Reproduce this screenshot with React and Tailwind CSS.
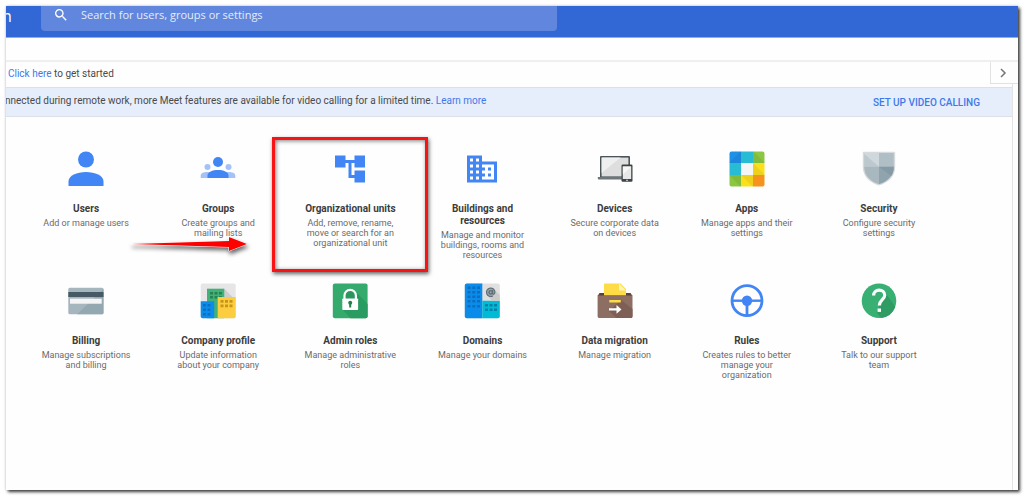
import React from "react";

const BLUE = "#4285f4";

const UsersIcon = () => (
  <svg viewBox="0 0 36 36" className="w-9 h-9" fill={BLUE}>
    <circle cx="18" cy="8.500" r="8" />
    <path d="M.5 35v-4.500C.5 24.500 9 21 18 21s17.500 3.500 17.500 9.500V35z" />
  </svg>
);

const GroupsIcon = () => (
  <svg viewBox="0 0 36 36" className="w-9 h-9" fill={BLUE}>
    <g fill="#a3c2f9">
      <circle cx="7.500" cy="16" r="3" />
      <circle cx="28.500" cy="16" r="3" />
      <path d="M.7 27v-2.500C.7 22 4 21 7.500 21h21c3.500 0 6.800 1 6.800 3.500V27z" />
    </g>
    <circle cx="18" cy="11" r="5" />
    <path d="M7.500 27v-2.500c0-3.500 5-5.500 10.500-5.500s10.500 2 10.500 5.500V27z" />
  </svg>
);

const OrgUnitsIcon = () => (
  <svg viewBox="0 0 24 24" className="w-9 h-9" fill={BLUE}>
    <path d="M22 11V3h-7v3H9V3H2v8h7V8h2v10h4v3h7v-8h-7v3h-2V8h2v3z" />
  </svg>
);

const BuildingsIcon = () => (
  <svg viewBox="0 0 24 24" className="w-9 h-9" fill={BLUE}>
    <path d="M12 7V3H2v18h20V7H12zM6 19H4v-2h2v2zm0-4H4v-2h2v2zm0-4H4V9h2v2zm0-4H4V5h2v2zm4 12H8v-2h2v2zm0-4H8v-2h2v2zm0-4H8V9h2v2zm0-4H8V5h2v2zm10 12h-8v-2h2v-2h-2v-2h2v-2h-2V9h8v10zm-2-8h-2v2h2v-2zm0 4h-2v2h2v-2z" />
  </svg>
);

const DevicesIcon = () => (
  <svg viewBox="0 0 36 36" className="w-9 h-9">
    <rect x="3" y="5" width="30" height="22" rx="1" fill="#4b5458" />
    <rect x="4.600" y="6.600" width="26.800" height="18.800" fill="#dedede" />
    <path d="M4.600 6.600h19L4.600 22z" fill="#efefef" />
    <path d="M.8 26h25v1.200c0 .8-.6 1.300-1.400 1.300H2.200C1.400 28.500.8 28 .8 27.200z" fill="#6d7679" />
    <rect x="24.500" y="13.500" width="11" height="17.200" rx="1.200" fill="#3c4447" />
    <rect x="25.800" y="15.500" width="8.400" height="12.500" fill="#e8e8e8" />
    <path d="M25.800 15.500h8.400l-8.400 8z" fill="#f7f7f7" />
    <rect x="29" y="28.800" width="2" height="1" fill="#cfd8dc" />
  </svg>
);

const AppsIcon = () => (
  <svg viewBox="0 0 36 36" className="w-9 h-9">
    <clipPath id="apps-clip">
      <rect x=".5" y=".5" width="35" height="35" rx="2" />
    </clipPath>
    <g clipPath="url(#apps-clip)">
      <rect width="12" height="12" fill="#1e90e8" />
      <rect x="12" width="12" height="12" fill="#27bcd4" />
      <rect x="24" width="12" height="12" fill="#8bc740" />
      <rect y="12" width="12" height="12" fill="#27bcd4" />
      <rect x="12" y="12" width="12" height="12" fill="#f5f5f5" />
      <rect x="24" y="12" width="12" height="12" fill="#fcdf1c" />
      <rect y="24" width="12" height="12" fill="#8bc740" />
      <rect x="12" y="24" width="12" height="12" fill="#fcdf1c" />
      <rect x="24" y="24" width="12" height="12" fill="#f6921e" />
      <g fill="#000" opacity=".06">
        <path d="M12 0v12H0z" />
        <path d="M24 0l12 12H24z" />
        <path d="M24 12l12 12H24z" />
        <path d="M0 24h12v12z" />
        <path d="M12 24h12v12z" />
      </g>
    </g>
  </svg>
);

const SecurityIcon = () => (
  <svg viewBox="0 0 36 36" className="w-9 h-9">
    <clipPath id="shield-clip">
      <path d="M3.200 2h29.600v14c0 8-5.300 14.300-14.800 17.200C8.500 30.300 3.200 24 3.200 16z" />
    </clipPath>
    <path
      d="M3 .8h30c.7 0 1.200.5 1.200 1.200v14c0 9-6.200 15.500-16.200 18.500C8 31.500 1.800 25 1.800 16V2c0-.7.5-1.200 1.200-1.200z"
      fill="#d6dadc"
    />
    <g clipPath="url(#shield-clip)">
      <rect width="18" height="15.700" fill="#cfd8dc" />
      <path d="M2 2l16 13.700H2z" fill="#bcc8cd" />
      <rect x="18" width="18" height="15.700" fill="#b0bec5" />
      <rect y="15.700" width="18" height="20" fill="#a9b8bf" />
      <rect x="18" y="15.700" width="18" height="20" fill="#90a4ae" />
      <path d="M18 15.700l16 12V15.700z" fill="#849aa5" />
    </g>
  </svg>
);

const BillingIcon = () => (
  <svg viewBox="0 0 36 36" className="w-9 h-9">
    <rect x=".3" y="4.700" width="35.200" height="26.600" rx="1.500" fill="#a5b6be" />
    <path d="M35.500 6v23.800c0 .8-.7 1.500-1.500 1.500H9z" fill="#94a8b1" />
    <rect x=".3" y="9" width="35.200" height="5" fill="#455a64" />
    <rect x="2" y="15.700" width="31.700" height="5" fill="#f5f5f5" />
  </svg>
);

const CompanyIcon = () => (
  <svg viewBox="0 0 36 36" className="w-9 h-9">
    <rect x=".7" y=".4" width="35" height="34.800" rx="2" fill="#e6e6e6" />
    <path d="M24.300 5.700L34 15.500H24z" fill="#cdcdcd" />
    <rect x="7" y="5.700" width="17.300" height="29.500" fill="#43b077" />
    <path d="M10 9h3v2.500h-3zM14.500 9h3v2.500h-3zM19 9h3v2.500h-3zM10 13h3v2.500h-3zM14.500 13h3v2.500h-3zM19 13h3v2.500h-3z" fill="#248454" />
    <path d="M17.700 14h18v19.200c0 1.100-.9 2-2 2h-16z" fill="#fdcd40" />
    <path d="M20.500 17h3v2.800h-3zM25 17h3v2.800h-3zM29.500 17h3v2.800h-3zM20.500 21.400h3v2.800h-3zM25 21.400h3v2.800h-3zM29.500 21.400h3v2.800h-3z" fill="#c89519" />
    <path d="M.7 18.300h13.500v16.900H2.700c-1.100 0-2-.9-2-2z" fill="#0b8ceb" />
    <path d="M3 21h2.800v2.500H3zM7.500 21h2.800v2.500H7.500zM3 25.500h2.800V28H3zM7.500 25.500h2.800V28H7.500zM3 30h2.800v2.500H3zM7.500 30h2.800v2.500H7.500z" fill="#0a6fc0" />
  </svg>
);

const AdminRolesIcon = () => (
  <svg viewBox="0 0 36 36" className="w-9 h-9">
    <rect x=".8" y=".4" width="34.800" height="34.800" rx="2" fill="#34aa6d" />
    <path d="M24 9l11.600 12v12.200c0 1.100-.9 2-2 2H18.500l-8.200-9z" fill="#2a9c61" />
    <path d="M12.500 17v-4.500a5.700 5.700 0 0 1 11.400 0V17" fill="#2a955d" stroke="#fff" strokeWidth="2.200" />
    <rect x="10.300" y="15.500" width="15.800" height="11.500" rx=".8" fill="#fff" />
    <circle cx="18.200" cy="19.700" r="2" fill="#23804d" />
    <rect x="17.200" y="20" width="2" height="4.500" fill="#23804d" />
  </svg>
);

const DomainsIcon = () => (
  <svg viewBox="0 0 36 36" className="w-9 h-9">
    <rect x=".8" y=".4" width="35" height="34.800" rx="2" fill="#e0e0e0" />
    <path d="M2.800.4h15.500v34.800H2.800c-1.100 0-2-.9-2-2V2.400c0-1.100.9-2 2-2z" fill="#0b8ceb" />
    <path d="M3.500 3.500h3V6h-3zM8.300 3.500h3V6h-3zM13 3.500h3V6h-3zM3.500 8h3v2.500h-3zM8.300 8h3v2.500h-3zM13 8h3v2.500h-3zM3.500 12.500h3V15h-3zM8.300 12.500h3V15h-3zM13 12.500h3V15h-3zM3.500 17h3v2.500h-3zM8.300 17h3v2.500h-3zM13 17h3v2.500h-3zM3.500 22h3v2.500h-3zM8.300 22h3v2.500h-3zM13 22h3v2.500h-3z" fill="#0a6fc0" />
    <path d="M18.300 17.700h17.500v15.500c0 1.100-.9 2-2 2H18.300z" fill="#00bbd6" />
    <path d="M21 21h3v2.500h-3zM25.500 21h3v2.500h-3zM30 21h3v2.500h-3zM21 25.500h3V28h-3zM25.500 25.500h3V28h-3zM30 25.500h3V28h-3z" fill="#0481a6" />
    <path d="M30 6.500l5.800 5.500v5.700H28l-4-4.700z" fill="#cbcbcb" />
    <circle cx="26.700" cy="9.300" r="4" fill="#9aa5ab" />
    <circle cx="26.700" cy="9.300" r="1.700" fill="none" stroke="#5f6f78" strokeWidth="1.400" />
    <path d="M28.600 7v3.200c0 1.500 2.300 1.200 2.300-.9a4.200 4.200 0 1 0-2.100 3.600" fill="none" stroke="#5f6f78" strokeWidth="1.200" />
  </svg>
);

const MigrationIcon = () => (
  <svg viewBox="0 0 36 36" className="w-9 h-9">
    <path d="M2.500 10h31l2 3H.6z" fill="#5d4037" />
    <path d="M8 .4h15.500L29 6v6.500H7V1.400c0-.6.4-1 1-1z" fill="#fddc45" />
    <path d="M22 .4L29 7.500h-6c-.6 0-1-.4-1-1z" fill="#fff3b5" />
    <path d="M.6 12.500h34.900v20.800c0 1-.8 1.800-1.800 1.800H2.400c-1 0-1.800-.8-1.800-1.800z" fill="#8d6e63" />
    <path d="M24 17l11.500 9v7.300c0 1-.8 1.800-1.800 1.800H19.500L12 28z" fill="#7d5f55" />
    <rect x="12.300" y="17" width="11.500" height="2.500" fill="#fddc45" />
    <path d="M12 25.300h7.500V22l5 4.400-5 4.400v-3.300H12z" fill="#fff" />
  </svg>
);

const RulesIcon = () => (
  <svg viewBox="0 0 36 36" className="w-9 h-9" fill={BLUE}>
    <circle cx="18" cy="17.700" r="15" fill="none" stroke={BLUE} strokeWidth="2.800" />
    <circle cx="18" cy="17.700" r="5.200" />
    <path d="M3 16.500h30v2.400H3z" />
    <path d="M16.600 18h2.800v14.500h-2.800z" />
  </svg>
);

const SupportIcon = () => (
  <svg viewBox="0 0 36 36" className="w-9 h-9">
    <circle cx="18" cy="17.800" r="17.300" fill="#38b074" />
    <path d="M23.500 8.500l10.800 15.200A17.300 17.300 0 0 1 20 35l-4-5z" fill="#2f9c63" />
    <path d="M12.600 12.500c0-3.300 2.400-5.300 5.500-5.300s5.600 2 5.600 5c0 4.300-5.400 4.600-5.400 10.300" fill="none" stroke="#fff" strokeWidth="3.200" />
    <rect x="16.600" y="25.500" width="3.400" height="3.400" fill="#fff" />
  </svg>
);

const PointerArrow = () => (
  <svg
    viewBox="0 0 122 24"
    className="absolute top-[81px] -left-[22px] w-[122px] h-6 drop-shadow-[1px_3px_2px_rgba(0,0,0,0.6)]"
  >
    <path
      d="M1 12l98-3V5l18 7-18 7v-4z"
      fill="#f00"
      stroke="#fff"
      strokeWidth="1"
      strokeLinejoin="round"
      paintOrder="stroke"
    />
  </svg>
);

const HighlightBox = () => (
  <span className="absolute -top-[14px] -inset-x-3 h-[135px] border-[3px] border-[#f81414] shadow-[1px_2px_4px_rgba(0,0,0,0.6),inset_1px_1px_4px_rgba(0,0,0,0.5)]" />
);

const tiles = [
  { title: "Users", text: "Add or manage users", Icon: UsersIcon },
  { title: "Groups", text: "Create groups and mailing lists", Icon: GroupsIcon, Mark: PointerArrow },
  {
    title: "Organizational units",
    text: "Add, remove, rename, move or search for an organizational unit",
    Icon: OrgUnitsIcon,
    Mark: HighlightBox,
  },
  {
    title: "Buildings and resources",
    text: "Manage and monitor buildings, rooms and resources",
    Icon: BuildingsIcon,
  },
  { title: "Devices", text: "Secure corporate data on devices", Icon: DevicesIcon },
  { title: "Apps", text: "Manage apps and their settings", Icon: AppsIcon },
  { title: "Security", text: "Configure security settings", Icon: SecurityIcon },
  { title: "Billing", text: "Manage subscriptions and billing", Icon: BillingIcon },
  { title: "Company profile", text: "Update information about your company", Icon: CompanyIcon },
  { title: "Admin roles", text: "Manage administrative roles", Icon: AdminRolesIcon },
  { title: "Domains", text: "Manage your domains", Icon: DomainsIcon },
  { title: "Data migration", text: "Manage migration", Icon: MigrationIcon },
  { title: "Rules", text: "Creates rules to better manage your organization", Icon: RulesIcon },
  { title: "Support", text: "Talk to our support team", Icon: SupportIcon },
];

const Tile = ({ title, text, Icon, Mark }) => (
  <a href="#" className="relative flex flex-col items-center text-center">
    <Icon />
    <span className="mt-4 max-w-24 text-[10px] leading-3 font-bold text-[#3c3c3c]">{title}</span>
    <span className="mt-[3px] max-w-24 text-[9px] leading-[10px] text-[#6b6b6b]">{text}</span>
    {Mark && <Mark />}
  </a>
);

const Header = () => (
  <header className="flex items-start h-8 bg-[#3267d6] border-b border-[#8fabe8] text-white overflow-hidden">
    <span className="w-[39px] -ml-1 font-['Open_Sans',sans-serif] text-base leading-5">n</span>
    <label className="flex items-center w-[51%] h-[25px] pb-2 pl-3 rounded-b bg-[#6087dd]">
      <svg viewBox="0 0 24 24" className="w-4 h-4 shrink-0" fill="#fff" aria-hidden="true">
        <path d="M15.500 14h-.79l-.28-.27A6.470 6.470 0 0 0 16 9.500 6.500 6.500 0 1 0 9.500 16c1.610 0 3.090-.59 4.230-1.570l.27.280v.79l5 4.990L20.490 19l-4.990-5zm-6 0C7.010 14 5 11.990 5 9.500S7.010 5 9.500 5 14 7.010 14 9.500 11.990 14 9.500 14z" />
      </svg>
      <input
        type="text"
        aria-label="Search"
        placeholder="Search for users, groups or settings"
        className="ml-3 flex-1 min-w-0 bg-transparent outline-none font-['Open_Sans',sans-serif] text-[11px] leading-4 font-medium placeholder:text-[#e4ebfa]"
      />
    </label>
  </header>
);

export default function App() {
  return (
    <div className="flex min-h-screen p-1.5 bg-white font-[Roboto,sans-serif] text-[10px] text-[#4a4a4a]">
      <div className="flex flex-col flex-1 min-w-0 bg-[#fefefe] shadow-[2px_2px_3px_rgba(0,0,0,0.75),0_0_3px_rgba(0,0,0,0.2)]">
        <Header />
        <div className="h-6 border-b-2 border-[#efefef]" />

        {/* Getting started */}
        <div className="flex items-start justify-between h-[22px]">
          <p className="pl-0.5 leading-6">
            <a href="#" className="text-[#4079ea]">Click here</a> to get started
          </p>
          <button
            type="button"
            aria-label="Next"
            className="flex items-center justify-center w-7 h-[22px] pr-1 border-l border-b border-[#e2e2e2]"
          >
            <svg viewBox="0 0 12 12" className="w-3 h-3" fill="none" stroke="#757575" strokeWidth="1.500">
              <path d="M4 2l4 4-4 4" />
            </svg>
          </button>
        </div>

        <main className="flex-1 mr-[5px] pt-[3px] border-r border-[#e4e4e4]">
          {/* Video calling banner */}
          <div className="flex items-center justify-between h-[30px] pr-8 border-y border-[#dde1e7] bg-[#e6eefb] overflow-hidden">
            <p className="-ml-px pb-1 whitespace-nowrap">
              nnected during remote work, more Meet features are available for video calling for a limited time.{" "}
              <a href="#" className="text-[#4079ea]">Learn more</a>
            </p>
            <button type="button" className="font-medium text-[#4079ea] whitespace-nowrap">
              SET UP VIDEO CALLING
            </button>
          </div>

          <div className="grid grid-cols-7 gap-y-[23px] pt-[34px] pl-[14px] pr-[67px]">
            {tiles.map((tile) => (
              <Tile key={tile.title} {...tile} />
            ))}
          </div>
        </main>
      </div>
    </div>
  );
}
